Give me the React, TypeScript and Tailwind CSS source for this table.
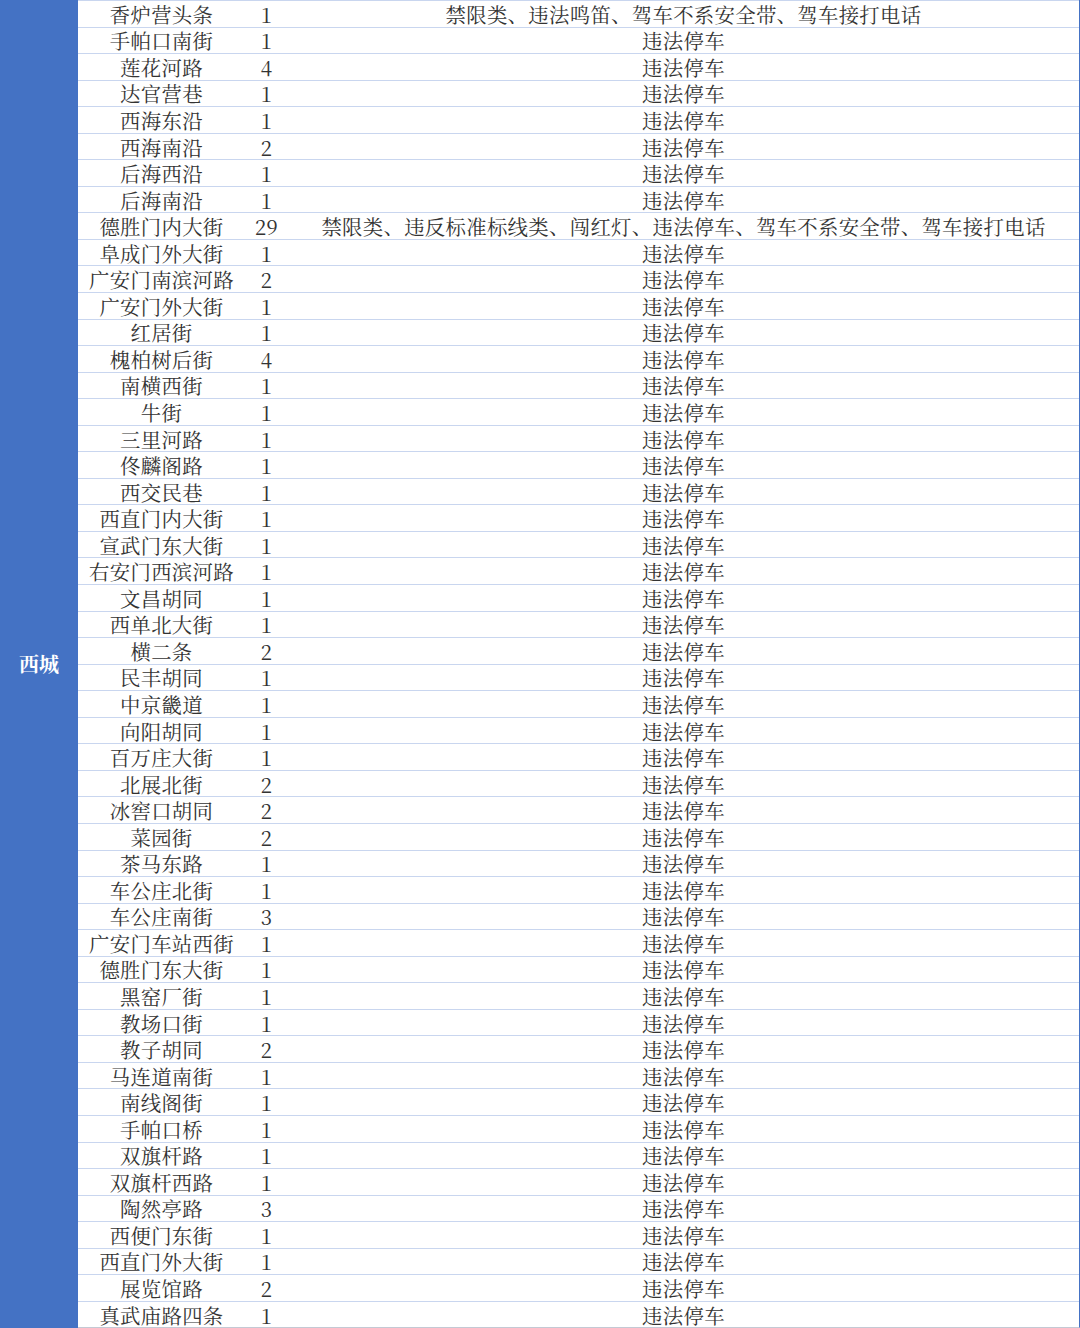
import React from "react";

const rows: [string, string, string][] = [
  ["香炉营头条", "1", "禁限类、违法鸣笛、驾车不系安全带、驾车接打电话"],
  ["手帕口南街", "1", "违法停车"],
  ["莲花河路", "4", "违法停车"],
  ["达官营巷", "1", "违法停车"],
  ["西海东沿", "1", "违法停车"],
  ["西海南沿", "2", "违法停车"],
  ["后海西沿", "1", "违法停车"],
  ["后海南沿", "1", "违法停车"],
  ["德胜门内大街", "29", "禁限类、违反标准标线类、闯红灯、违法停车、驾车不系安全带、驾车接打电话"],
  ["阜成门外大街", "1", "违法停车"],
  ["广安门南滨河路", "2", "违法停车"],
  ["广安门外大街", "1", "违法停车"],
  ["红居街", "1", "违法停车"],
  ["槐柏树后街", "4", "违法停车"],
  ["南横西街", "1", "违法停车"],
  ["牛街", "1", "违法停车"],
  ["三里河路", "1", "违法停车"],
  ["佟麟阁路", "1", "违法停车"],
  ["西交民巷", "1", "违法停车"],
  ["西直门内大街", "1", "违法停车"],
  ["宣武门东大街", "1", "违法停车"],
  ["右安门西滨河路", "1", "违法停车"],
  ["文昌胡同", "1", "违法停车"],
  ["西单北大街", "1", "违法停车"],
  ["横二条", "2", "违法停车"],
  ["民丰胡同", "1", "违法停车"],
  ["中京畿道", "1", "违法停车"],
  ["向阳胡同", "1", "违法停车"],
  ["百万庄大街", "1", "违法停车"],
  ["北展北街", "2", "违法停车"],
  ["冰窖口胡同", "2", "违法停车"],
  ["菜园街", "2", "违法停车"],
  ["茶马东路", "1", "违法停车"],
  ["车公庄北街", "1", "违法停车"],
  ["车公庄南街", "3", "违法停车"],
  ["广安门车站西街", "1", "违法停车"],
  ["德胜门东大街", "1", "违法停车"],
  ["黑窑厂街", "1", "违法停车"],
  ["教场口街", "1", "违法停车"],
  ["教子胡同", "2", "违法停车"],
  ["马连道南街", "1", "违法停车"],
  ["南线阁街", "1", "违法停车"],
  ["手帕口桥", "1", "违法停车"],
  ["双旗杆路", "1", "违法停车"],
  ["双旗杆西路", "1", "违法停车"],
  ["陶然亭路", "3", "违法停车"],
  ["西便门东街", "1", "违法停车"],
  ["西直门外大街", "1", "违法停车"],
  ["展览馆路", "2", "违法停车"],
  ["真武庙路四条", "1", "违法停车"],
];

export default function App() {
  return (
    <div
      className="w-[1080px] h-[1328px] bg-white flex text-[#333333] text-[20.4px] overflow-hidden"
      style={{ fontFamily: '"Noto Serif CJK SC", "Liberation Serif", "Noto Sans CJK SC", serif' }}
    >
      <div className="w-[78px] bg-[#4472c4] flex items-center justify-center text-white font-bold text-[20px] shrink-0">
        西城
      </div>
      <div className="flex-1 flex flex-col border-r border-[#4472c4] border-b border-b-[#c4c9d4]">
        {rows.map((r, i) => (
          <div
            key={i}
            className="flex-1 flex items-center border-t border-[#c9d6ef] leading-[20px] tracking-[0.3px]"
          >
            <div className="w-[167px] text-center whitespace-nowrap pt-[2px]">{r[0]}</div>
            <div className="w-[43px] text-center pt-[2px]">{r[1]}</div>
            <div className="flex-1 text-center whitespace-nowrap pt-[2px]">{r[2]}</div>
          </div>
        ))}
      </div>
    </div>
  );
}
